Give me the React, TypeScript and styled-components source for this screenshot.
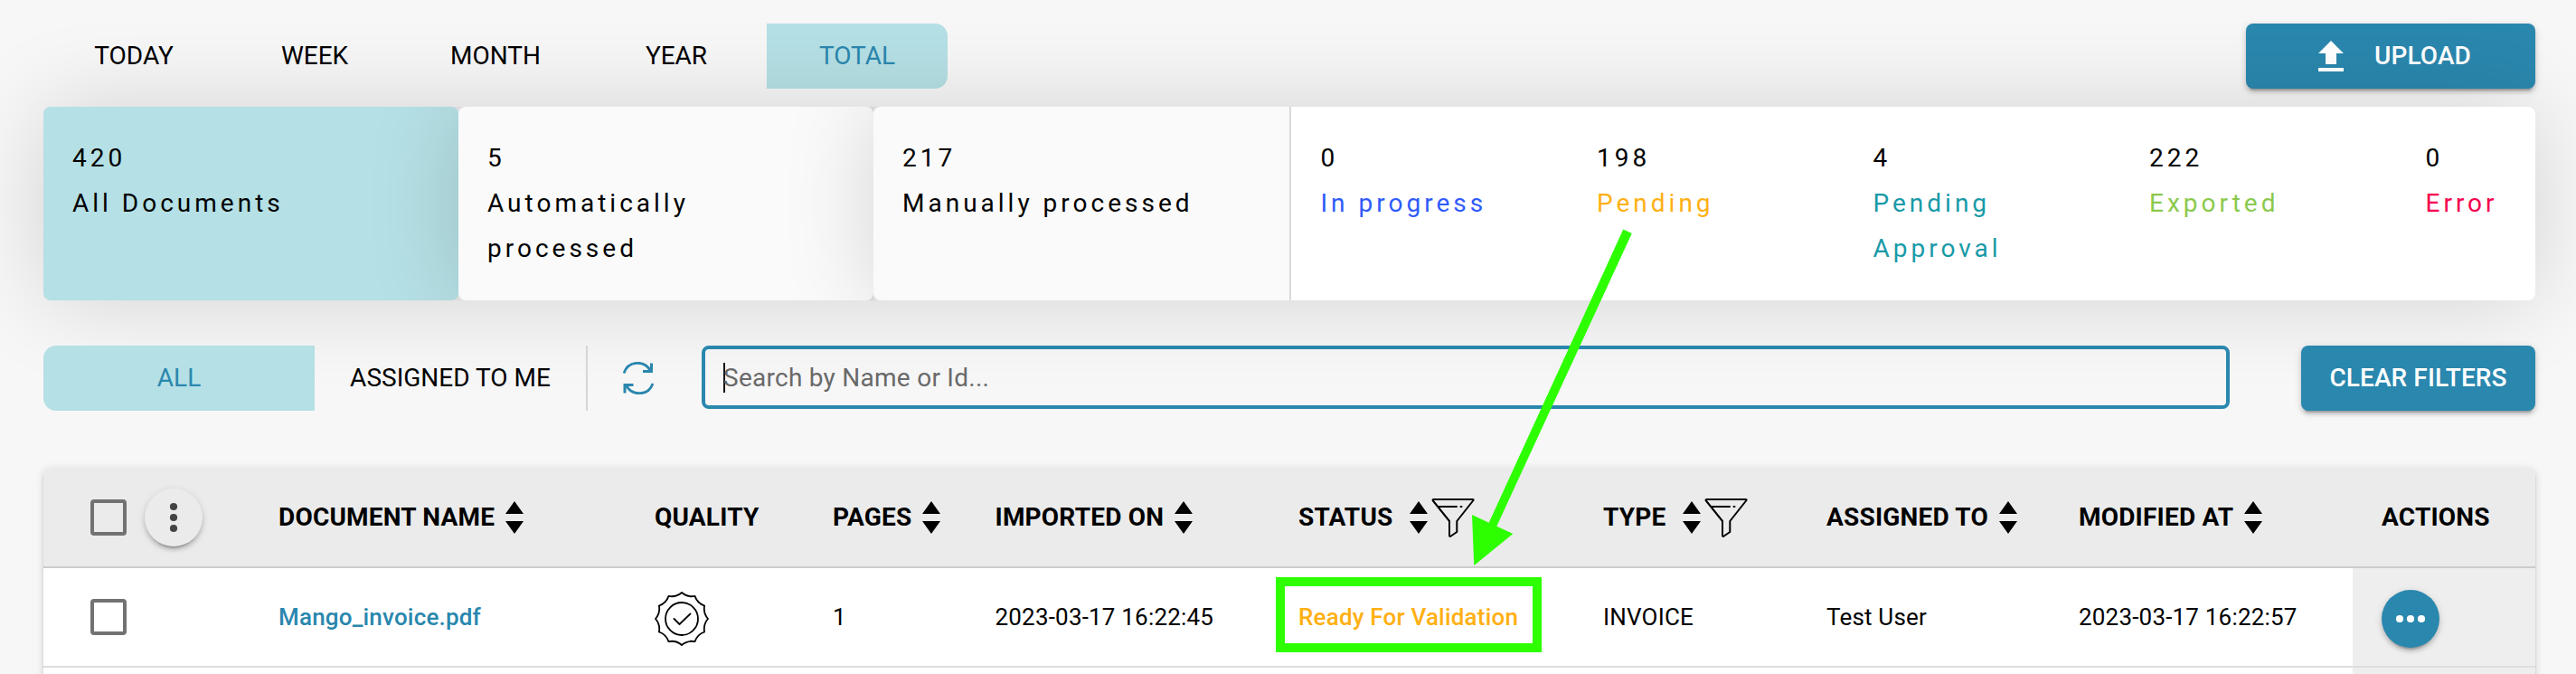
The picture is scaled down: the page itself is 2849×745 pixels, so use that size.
import React from "react";
import styled, { createGlobalStyle, css } from "styled-components";

const blue = "#2a87ae";
const aqua = "#b5e0e5";
const green = "#2dff00";

const GlobalStyle = createGlobalStyle`
  * { box-sizing: border-box; }
  html, body { margin: 0; background: #f7f7f7; overflow: hidden; }
  body { font-family: Roboto, sans-serif; font-size: 28px; color: #000; }
  button, input { font: inherit; color: inherit; }
`;

const Page = styled.main`
  position: relative;
  width: 2849px;
  height: 745px;
  padding: 26px 45px 0 48px;
  overflow: hidden;
  display: flex;
  flex-direction: column;
`;

const Toolbar = styled.div`
  display: flex;
  align-items: flex-start;
  height: 72px;
`;

const Spacer = styled.div`
  flex: 1;
`;

const Tab = styled.button<{ $width: number; $active?: "left" | "right" }>`
  width: ${(p) => p.$width}px;
  height: 72px;
  padding: 0;
  border: 0;
  line-height: 72px;
  background: transparent;
  ${(p) =>
    p.$active &&
    css`
      color: ${blue};
      background: ${aqua};
      border-radius: ${p.$active === "left" ? "14px 0 0 14px" : "0 14px 14px 0"};
    `}
`;

const PrimaryButton = styled.button<{ $width: number; $indent?: number }>`
  display: flex;
  align-items: center;
  justify-content: center;
  gap: 34px;
  width: ${(p) => p.$width}px;
  height: 72px;
  padding: 0 0 0 ${(p) => p.$indent ?? 0}px;
  border: 0;
  border-radius: 8px;
  background: ${blue};
  color: #fff;
  font-weight: 500;
  line-height: 72px;
  letter-spacing: 0.1px;
  white-space: nowrap;
  box-shadow: 0 6px 2px -4px rgba(0, 0, 0, 0.2), 0 4px 4px rgba(0, 0, 0, 0.14),
    0 2px 10px rgba(0, 0, 0, 0.12);
`;

const cardShadow = "0 0 100px rgba(0, 0, 0, 0.15)";

const Summary = styled.section`
  position: relative;
  display: flex;
  height: 214px;
  margin-top: 20px;
  border-radius: 8px;
  background: #e6e6e6;
  box-shadow: ${cardShadow};
`;

const Card = styled.div<{ $active?: boolean; $last?: boolean }>`
  width: ${(p) => (p.$last ? 462 : 459)}px;
  padding: 32px;
  border-radius: ${(p) => (p.$last ? "8px 0 0 8px" : "8px")};
  border-right: ${(p) => (p.$last ? "2px solid #d9d9d9" : "0")};
  background: ${(p) => (p.$active ? aqua : "#fafafa")};
  ${(p) =>
    !p.$active &&
    css`
      box-shadow: ${cardShadow};
      clip-path: inset(0 0 0 -110px);
    `}
`;

const Statuses = styled.div`
  flex: 1;
  display: grid;
  grid-template-columns: repeat(4, 305.5px) 1fr;
  padding: 32px 0 32px 32.5px;
  border-radius: 0 8px 8px 0;
  background: #fff;
`;

const Metric = styled.div<{ $color?: string }>`
  line-height: 50px;
  letter-spacing: 4px;
  color: ${(p) => p.$color ?? "#000"};
`;

const Wrapped = styled.div`
  max-width: 250px;
`;

const FilterBar = styled(Toolbar)`
  position: relative;
  margin-top: 50px;
`;

const RefreshButton = styled.button`
  display: flex;
  align-items: center;
  width: 128px;
  height: 72px;
  padding: 0 0 0 38px;
  border: 0;
  border-left: 2px solid #d6d6d6;
  background: transparent;
`;

const SearchBox = styled.div`
  display: flex;
  align-items: center;
  width: 1690px;
  height: 70px;
  padding-left: 20px;
  border: 4px solid ${blue};
  border-radius: 8px;
  color: #696969;
  letter-spacing: 0.26px;
`;

const Caret = styled.span`
  width: 2px;
  height: 33px;
  margin-right: -2px;
  background: #111;
`;

const Table = styled.section`
  position: relative;
  margin-top: 63px;
  height: 300px;
  border-radius: 8px 8px 0 0;
  background: #fff;
  box-shadow: 0 4px 2px -2px rgba(0, 0, 0, 0.2), 0 2px 2px rgba(0, 0, 0, 0.14),
    0 2px 8px rgba(0, 0, 0, 0.16);
`;

const columns = "228px 416px 197px 179.5px 335.5px 337px 247px 279px 335px 1fr";

const Row = styled.div<{ $head?: boolean }>`
  display: grid;
  grid-template-columns: ${columns};
  height: ${(p) => (p.$head ? 111 : 110)}px;
  font-size: ${(p) => (p.$head ? 28 : 26)}px;
  font-weight: ${(p) => (p.$head ? 700 : 400)};
  letter-spacing: ${(p) => (p.$head ? 0.2 : 0.19)}px;
  background: ${(p) => (p.$head ? "#ebebeb" : "#fff")};
  border-bottom: 2px solid ${(p) => (p.$head ? "#cccccc" : "#dedede")};
  border-radius: ${(p) => (p.$head ? "8px 8px 0 0" : "0")};
`;

const Cell = styled.div<{ $gap?: number; $color?: string; $shaded?: boolean; $drop?: number }>`
  display: flex;
  align-items: center;
  gap: ${(p) => p.$gap ?? 12}px;
  padding-left: 32px;
  padding-top: ${(p) => p.$drop ?? 0}px;
  white-space: nowrap;
  color: ${(p) => p.$color ?? "#000"};
  font-weight: ${(p) => (p.$color ? 500 : "inherit")};
  background: ${(p) => (p.$shaded ? "#eeeeee" : "transparent")};
`;

const SelectCell = styled(Cell)`
  gap: 20px;
  padding-left: 52px;
`;

const Checkbox = styled.span`
  width: 40px;
  height: 40px;
  border: 4px solid #727272;
  border-radius: 4px;
`;

const RoundButton = styled.button<{ $primary?: boolean }>`
  display: flex;
  width: 64px;
  height: 64px;
  padding: 0;
  border: 0;
  border-radius: 50%;
  color: ${(p) => (p.$primary ? "#fff" : "#444")};
  background: ${(p) => (p.$primary ? blue : "#ebebeb")};
  box-shadow: 0 6px 2px -4px rgba(0, 0, 0, 0.2), 0 4px 4px rgba(0, 0, 0, 0.14),
    0 2px 10px rgba(0, 0, 0, 0.12);
`;

const Icons = styled.span`
  display: flex;
  align-items: center;
  gap: 4px;
  padding-top: 1px;
`;

const Highlight = styled.div`
  position: absolute;
  left: 1411px;
  top: 638px;
  width: 294px;
  height: 83px;
  border: 10px solid ${green};
`;

const Arrow = styled.svg`
  position: absolute;
  left: 1600px;
  top: 240px;
`;

const SortIcon = () => (
  <svg width="20" height="36" viewBox="0 0 20 36">
    <path d="M10 0 20 14H0ZM10 36 20 22H0Z" />
  </svg>
);

const FunnelIcon = () => (
  <svg width="48" height="40" viewBox="0 2 48 40" overflow="visible" fill="none" stroke="#000" strokeWidth="2" strokeLinejoin="round" strokeLinecap="round">
    <path d="M1.500 3Q1.500 2 2.500 2H45.500Q47 2 46.500 3L28.300 26V38L21 43Q20 43 20 42V26L1.500 3Z" />
    <path d="M8 10H28M32.500 10H33.500" />
  </svg>
);

const DotsIcon = ({ vertical }: { vertical?: boolean }) => (
  <svg width="64" height="64" viewBox="0 0 64 64" fill="currentColor">
    {[20, 32, 44].map((n) => (
      <circle key={n} cx={vertical ? 32 : n} cy={vertical ? n : 32} r="4.1" />
    ))}
  </svg>
);

const UploadIcon = () => (
  <svg width="28" height="34" viewBox="0 0 28 34" fill="#fff">
    <path d="M14 0 28 14H20V26H8V14H0ZM0 30H28V34H0Z" />
  </svg>
);

const RefreshIcon = () => (
  <svg width="36" height="36" viewBox="0 0 36 36" fill="none" stroke={blue} strokeWidth="2.8">
    <path d="M2 12.500C7-2 25-2 31.500 10M34 24C29 38 11 38 4.500 26" />
    <path d="M32.500 1.500V10.500H23M3 34.500V25.500H12.500" strokeWidth="3" />
  </svg>
);

const sealPath = (() => {
  const at = (radius: number, degrees: number) => {
    const a = (degrees * Math.PI) / 180;
    return `${(30 + radius * Math.sin(a)).toFixed(2)} ${(30 - radius * Math.cos(a)).toFixed(2)}`;
  };
  let d = `M${at(29, 0)}`;
  for (let i = 0; i < 12; i++) d += `Q${at(24.4, i * 30 + 15)} ${at(29, i * 30 + 30)}`;
  return d + "Z";
})();

const SealIcon = () => (
  <svg width="60" height="60" viewBox="0 0 60 60" fill="none" stroke="#000" strokeWidth="1.8" strokeLinejoin="round" strokeLinecap="round">
    <path d={sealPath} />
    <circle cx="30" cy="30" r="18" />
    <path d="M21.500 30 27.500 36 39.500 24.500" />
  </svg>
);

const statuses = [
  { count: 0, label: "In progress", color: "#2f5bfb" },
  { count: 198, label: "Pending", color: "#ffb013" },
  { count: 4, label: "Pending Approval", color: "#189aa8" },
  { count: 222, label: "Exported", color: "#8bc94c" },
  { count: 0, label: "Error", color: "#f5004d" },
];

const headers = [
  { label: "DOCUMENT NAME", sort: true },
  { label: "QUALITY" },
  { label: "PAGES", sort: true },
  { label: "IMPORTED ON", sort: true },
  { label: "STATUS", sort: true, filter: true },
  { label: "TYPE", sort: true, filter: true },
  { label: "ASSIGNED TO", sort: true },
  { label: "MODIFIED AT", sort: true },
  { label: "ACTIONS" },
];

export default function App() {
  return (
    <>
      <GlobalStyle />
      <Page>
        <Toolbar>
          {["TODAY", "WEEK", "MONTH", "YEAR"].map((t) => (
            <Tab key={t} $width={200}>{t}</Tab>
          ))}
          <Tab $width={200} $active="right">TOTAL</Tab>
          <Spacer />
          <PrimaryButton $width={320} $indent={9}>
            <UploadIcon />
            UPLOAD
          </PrimaryButton>
        </Toolbar>

        <Summary>
          <Card $active>
            <Metric>420</Metric>
            <Metric>All Documents</Metric>
          </Card>
          <Card>
            <Metric>5</Metric>
            <Metric><Wrapped>Automatically processed</Wrapped></Metric>
          </Card>
          <Card $last>
            <Metric>217</Metric>
            <Metric>Manually processed</Metric>
          </Card>
          <Statuses>
            {statuses.map((s) => (
              <div key={s.label}>
                <Metric>{s.count}</Metric>
                <Metric $color={s.color}><Wrapped>{s.label}</Wrapped></Metric>
              </div>
            ))}
          </Statuses>
        </Summary>

        <FilterBar>
          <Tab $width={300} $active="left">ALL</Tab>
          <Tab $width={300}>ASSIGNED TO ME</Tab>
          <RefreshButton aria-label="Refresh"><RefreshIcon /></RefreshButton>
          <SearchBox>
            <Caret />
            Search by Name or Id...
          </SearchBox>
          <Spacer />
          <PrimaryButton $width={259}>CLEAR FILTERS</PrimaryButton>
        </FilterBar>

        <Table>
          <Row $head>
            <SelectCell $drop={1}>
              <Checkbox />
              <RoundButton aria-label="More"><DotsIcon vertical /></RoundButton>
            </SelectCell>
            {headers.map((h) => (
              <Cell key={h.label} $gap={h.filter ? 18 : 12}>
                {h.label}
                {h.sort && (
                  <Icons>
                    <SortIcon />
                    {h.filter && <FunnelIcon />}
                  </Icons>
                )}
              </Cell>
            ))}
          </Row>
          <Row>
            <SelectCell><Checkbox /></SelectCell>
            <Cell $color={blue}>Mango_invoice.pdf</Cell>
            <Cell $drop={4}><SealIcon /></Cell>
            <Cell>1</Cell>
            <Cell>2023-03-17 16:22:45</Cell>
            <Cell $color="#ffb013">Ready For Validation</Cell>
            <Cell>INVOICE</Cell>
            <Cell>Test User</Cell>
            <Cell>2023-03-17 16:22:57</Cell>
            <Cell $shaded $drop={4}>
              <RoundButton $primary aria-label="Actions"><DotsIcon /></RoundButton>
            </Cell>
          </Row>
          <Row>
            <Cell /><Cell /><Cell /><Cell /><Cell /><Cell /><Cell /><Cell /><Cell />
            <Cell $shaded />
          </Row>
        </Table>

        <Highlight />
        <Arrow width="220" height="400" viewBox="1600 240 220 400" fill={green}>
          <path d="M1795.300 253.500 1804.800 258 1655.300 581.700 1673.300 590 1630.300 625 1628 569 1646.700 577.700Z" />
        </Arrow>
      </Page>
    </>
  );
}
